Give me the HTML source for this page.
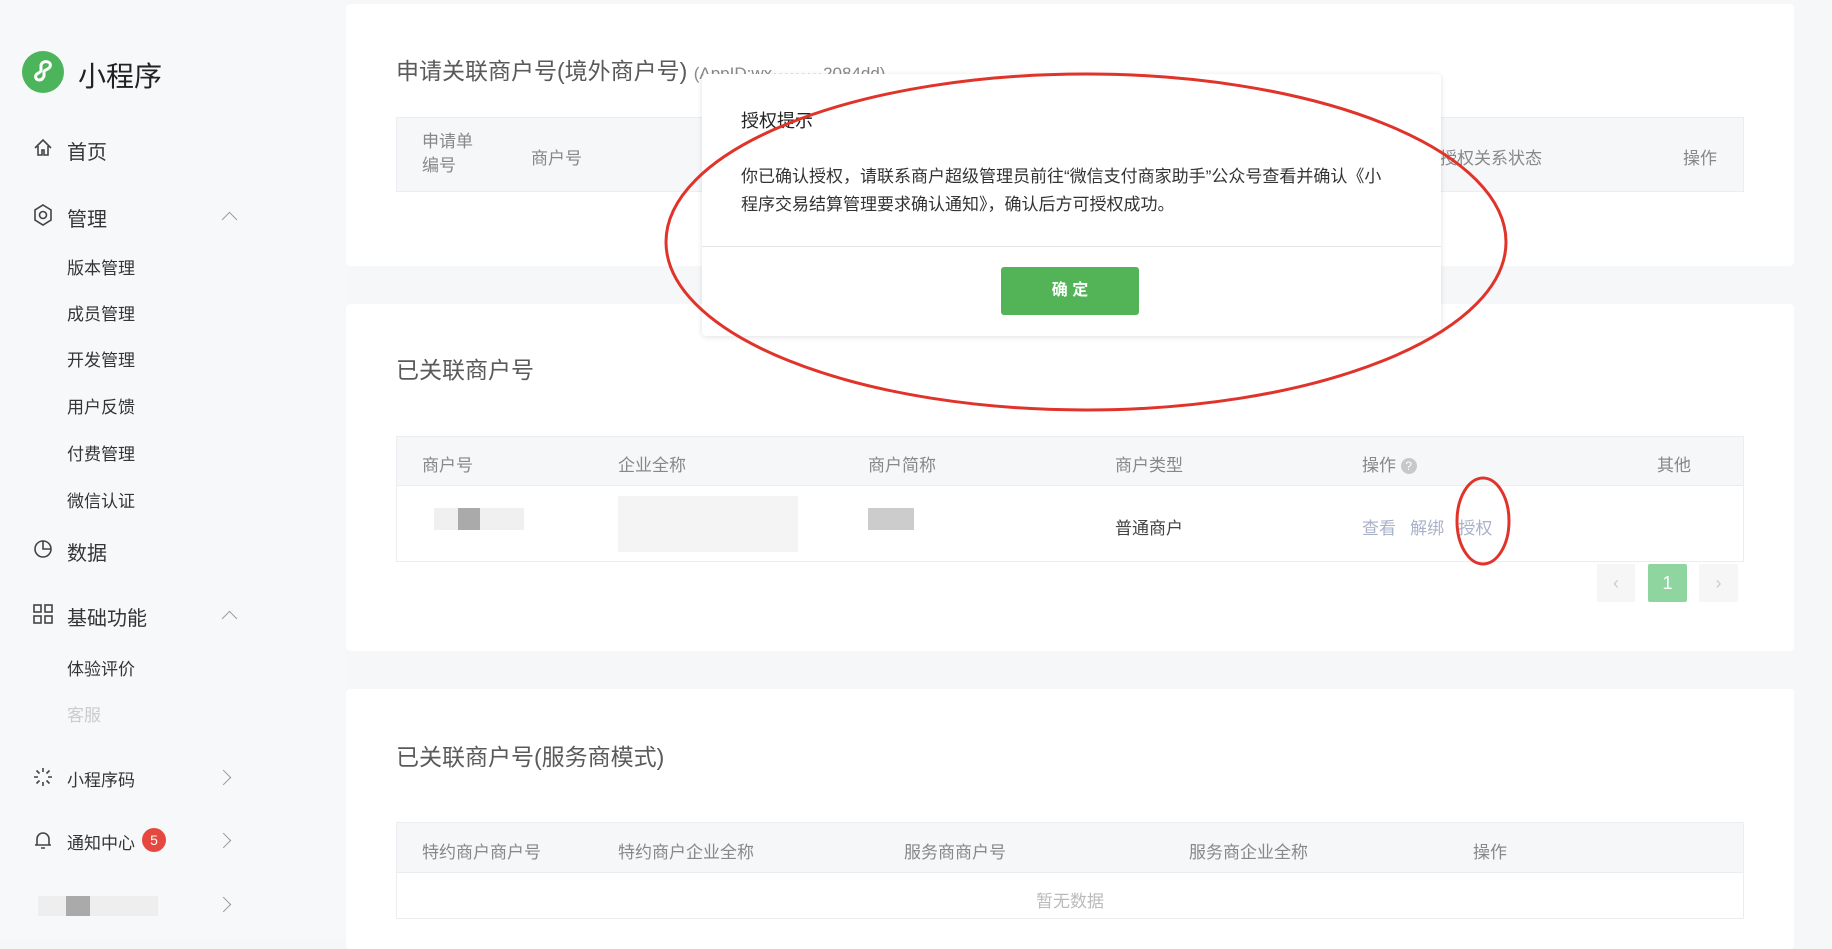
<!DOCTYPE html>
<html><head><meta charset="utf-8"><style>
*{margin:0;padding:0;box-sizing:border-box}
body{width:1832px;height:938px;overflow:hidden;background:#f6f7f9;font-family:"Liberation Sans","Noto Sans CJK SC",sans-serif;position:relative;color:#333}
.a{position:absolute;white-space:nowrap}
.side{position:absolute;left:0;top:0;width:346px;height:938px;background:#f7f8fa}
.m{font-size:20px;color:#353535}
.s{font-size:17px;color:#353535}
.card{position:absolute;left:346px;width:1448px;background:#fff;border-radius:4px}
.h{font-size:23px;color:#5a5a5a}
.th{font-size:17px;color:#888}
.tb{position:absolute;left:396px;width:1348px;border:1px solid #ebedf0}
.chev{position:absolute;width:11px;height:11px;border-left:1.6px solid #999;border-top:1.6px solid #999}
.blk{position:absolute;background:#e8e8e8}
</style></head><body>
<div class="side">
  <svg class="a" style="left:22px;top:51px" width="42" height="42" viewBox="0 0 42 42"><circle cx="21" cy="21" r="21" fill="#4cb45a"/><path d="M17 29c-3 0-4-3-3-5s4-2 5-4V14c1-3 4-4 7-3s3 4 1 6-5 2-5 4v4c-1 3-3 4-5 4z" fill="none" stroke="#fff" stroke-width="3"/></svg>
  <div class="a" style="left:78px;top:55px;font-size:28px;color:#222">小程序</div>
  <svg class="a" style="left:33px;top:138px" width="20" height="20" viewBox="0 0 20 20"><path d="M2 10L10 2l8 8M5 8v9h4v-5h2v5h4V8" fill="none" stroke="#444" stroke-width="1.6"/></svg>
  <div class="a m" style="left:67px;top:136px">首页</div>
  <svg class="a" style="left:33px;top:204px" width="20" height="22" viewBox="0 0 20 22"><path d="M10 1l8 5v10l-8 5-8-5V6z" fill="none" stroke="#444" stroke-width="1.6"/><circle cx="10" cy="11" r="3.5" fill="none" stroke="#444" stroke-width="1.6"/></svg>
  <div class="a m" style="left:67px;top:203px">管理</div>
  <div class="chev" style="left:224px;top:214px;transform:rotate(45deg)"></div>
  <div class="a s" style="left:67px;top:254px">版本管理</div>
  <div class="a s" style="left:67px;top:300px">成员管理</div>
  <div class="a s" style="left:67px;top:346px">开发管理</div>
  <div class="a s" style="left:67px;top:393px">用户反馈</div>
  <div class="a s" style="left:67px;top:440px">付费管理</div>
  <div class="a s" style="left:67px;top:487px">微信认证</div>
  <svg class="a" style="left:33px;top:539px" width="20" height="20" viewBox="0 0 20 20"><circle cx="10" cy="10" r="8" fill="none" stroke="#444" stroke-width="1.6"/><path d="M10 2v8h8" fill="none" stroke="#444" stroke-width="1.6"/></svg>
  <div class="a m" style="left:67px;top:537px">数据</div>
  <svg class="a" style="left:33px;top:604px" width="20" height="20" viewBox="0 0 20 20"><g fill="none" stroke="#444" stroke-width="1.6"><rect x="1" y="1" width="7" height="7"/><rect x="12" y="1" width="7" height="7"/><rect x="1" y="12" width="7" height="7"/><rect x="12" y="12" width="7" height="7"/></g></svg>
  <div class="a m" style="left:67px;top:602px">基础功能</div>
  <div class="chev" style="left:224px;top:613px;transform:rotate(45deg)"></div>
  <div class="a s" style="left:67px;top:655px">体验评价</div>
  <div class="a s" style="left:67px;top:701px;color:#ccc">客服</div>
  <svg class="a" style="left:33px;top:767px" width="20" height="20" viewBox="0 0 20 20"><g stroke="#444" stroke-width="1.6"><path d="M10 1v4M10 15v4M1 10h4M15 10h4M3.5 3.5l3 3M13.5 13.5l3 3M3.5 16.5l3-3M13.5 6.5l3-3"/></g></svg>
  <div class="a s" style="left:67px;top:766px">小程序码</div>
  <div class="chev" style="left:218px;top:772px;transform:rotate(135deg)"></div>
  <svg class="a" style="left:33px;top:830px" width="20" height="20" viewBox="0 0 20 20"><path d="M4 15V9a6 6 0 0112 0v6h2H2zM8 18h4" fill="none" stroke="#444" stroke-width="1.6"/></svg>
  <div class="a s" style="left:67px;top:829px">通知中心</div>
  <div class="a" style="left:142px;top:828px;width:24px;height:24px;border-radius:12px;background:#e5483f;color:#fff;font-size:14px;text-align:center;line-height:24px">5</div>
  <div class="chev" style="left:218px;top:835px;transform:rotate(135deg)"></div>
  <div class="blk" style="left:38px;top:896px;width:120px;height:20px;background:#eee"></div>
  <div class="blk" style="left:66px;top:896px;width:24px;height:20px;background:#aaa"></div>
  <div class="chev" style="left:218px;top:899px;transform:rotate(135deg)"></div>
</div>

<div class="card" style="top:4px;height:262px"></div>
<div class="a h" style="left:396px;top:52px">申请关联商户号(境外商户号) <span style="font-size:17px;color:#888">(AppID:wx·········2084dd)</span></div>
<div class="tb" style="top:117px;height:75px;background:#f6f7f9"></div>
<div class="a th" style="left:422px;top:130px;line-height:24px">申请单<br>编号</div>
<div class="a th" style="left:531px;top:144px">商户号</div>
<div class="a th" style="left:1440px;top:144px">授权关系状态</div>
<div class="a th" style="left:1683px;top:144px">操作</div>

<div class="card" style="top:304px;height:347px"></div>
<div class="a h" style="left:396px;top:351px">已关联商户号</div>
<div class="tb" style="top:436px;height:126px"></div>
<div class="a" style="left:397px;top:437px;width:1346px;height:49px;background:#f6f7f9;border-bottom:1px solid #ebedf0"></div>
<div class="a th" style="left:422px;top:451px">商户号</div>
<div class="a th" style="left:618px;top:451px">企业全称</div>
<div class="a th" style="left:868px;top:451px">商户简称</div>
<div class="a th" style="left:1115px;top:451px">商户类型</div>
<div class="a th" style="left:1362px;top:451px">操作 <span style="display:inline-block;width:16px;height:16px;border-radius:8px;background:#c8c8c8;color:#fff;font-size:12px;text-align:center;line-height:16px;vertical-align:1px">?</span></div>
<div class="a th" style="left:1657px;top:451px">其他</div>
<div class="blk" style="left:434px;top:508px;width:90px;height:22px;background:#f0f0f0"></div>
<div class="blk" style="left:458px;top:508px;width:22px;height:22px;background:#aaa"></div>
<div class="blk" style="left:618px;top:496px;width:180px;height:56px;background:#f4f4f4"></div>
<div class="blk" style="left:868px;top:508px;width:46px;height:22px;background:#ccc"></div>
<div class="a" style="left:1115px;top:514px;font-size:17px;color:#444">普通商户</div>
<div class="a" style="left:1362px;top:514px;font-size:17px;color:#a8b2c8">查看&nbsp;&nbsp; 解绑&nbsp;&nbsp; 授权</div>
<div class="a" style="left:1597px;top:564px;width:38px;height:38px;background:#f6f6f6;color:#ccc;text-align:center;line-height:38px;font-size:18px">‹</div>
<div class="a" style="left:1648px;top:564px;width:39px;height:38px;background:#8fd5a0;border-radius:2px;color:#fff;text-align:center;line-height:38px;font-size:18px">1</div>
<div class="a" style="left:1699px;top:564px;width:39px;height:38px;background:#f6f6f6;color:#ccc;text-align:center;line-height:38px;font-size:18px">›</div>

<div class="card" style="top:689px;height:260px"></div>
<div class="a h" style="left:396px;top:738px">已关联商户号(服务商模式)</div>
<div class="tb" style="top:822px;height:97px"></div>
<div class="a" style="left:397px;top:823px;width:1346px;height:50px;background:#f6f7f9;border-bottom:1px solid #ebedf0"></div>
<div class="a th" style="left:422px;top:838px">特约商户商户号</div>
<div class="a th" style="left:618px;top:838px">特约商户企业全称</div>
<div class="a th" style="left:904px;top:838px">服务商商户号</div>
<div class="a th" style="left:1189px;top:838px">服务商企业全称</div>
<div class="a th" style="left:1473px;top:838px">操作</div>
<div class="a" style="left:1036px;top:887px;font-size:17px;color:#bbb">暂无数据</div>

<div class="a" style="left:702px;top:74px;width:739px;height:262px;background:#fff;border-radius:4px;box-shadow:0 1px 6px rgba(0,0,0,.12)">
  <div class="a" style="left:39px;top:33px;font-size:18px;color:#222">授权提示</div>
  <div class="a" style="left:39px;top:89px;font-size:17px;color:#333;line-height:28px;white-space:normal;width:650px">你已确认授权，请联系商户超级管理员前往“微信支付商家助手”公众号查看并确认《小程序交易结算管理要求确认通知》，确认后方可授权成功。</div>
  <div class="a" style="left:0;top:172px;width:739px;height:1px;background:#e5e5e5"></div>
  <div class="a" style="left:299px;top:193px;width:138px;height:48px;background:#52b457;border-radius:3px;color:#fff;font-weight:bold;font-size:16px;text-align:center;line-height:48px">确 定</div>
</div>

<svg class="a" style="left:0;top:0" width="1832" height="938"><ellipse cx="1086" cy="242" rx="420" ry="168" fill="none" stroke="#e0332a" stroke-width="3"/><ellipse cx="1483" cy="521" rx="26" ry="43" fill="none" stroke="#e0332a" stroke-width="3"/></svg>
</body></html>
